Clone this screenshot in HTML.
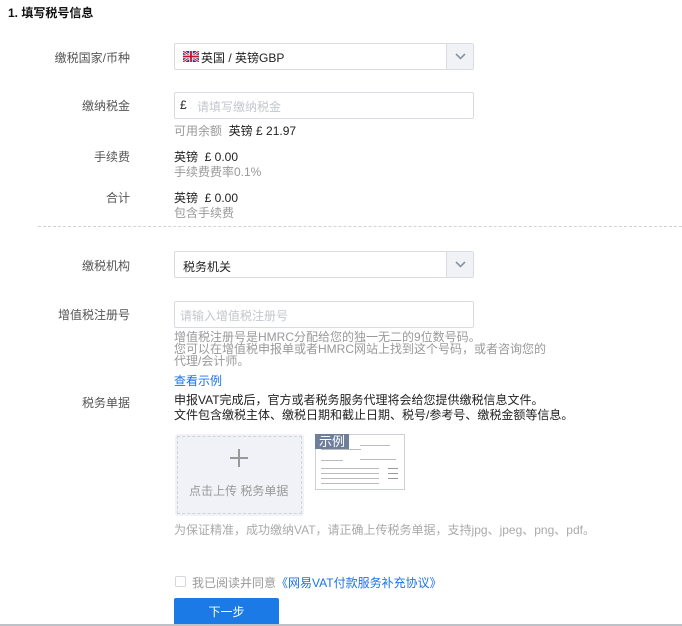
<!DOCTYPE html>
<html><head><meta charset="utf-8"><style>
*{margin:0;padding:0;box-sizing:border-box}
body{width:682px;height:626px;position:relative;background:#fff;font-family:"Liberation Sans","Noto Sans CJK SC",sans-serif;font-size:12px;color:#222;overflow:hidden}
.a{position:absolute;white-space:nowrap}
.lbl{position:absolute;right:552px;color:#555;text-align:right;white-space:nowrap}
.g{color:#999}
.box{position:absolute;left:174px;width:300px;height:27px;border:1px solid #d8dbe2;border-radius:2px;background:#fff}
.sel .arr{position:absolute;right:0;top:0;width:27px;height:25px;background:#f0f2f6;border-left:1px solid #d8dbe2}
.blue{color:#1a73e8}
</style></head><body>
<div class="a" style="left:8px;top:4px;font-weight:bold;font-size:12px;color:#111">1. 填写税号信息</div>

<div class="lbl" style="top:49px">缴税国家/币种</div>
<div class="box sel" style="top:43px">
 <svg class="a" style="left:8px;top:7px" width="16" height="11" viewBox="0 0 16 11"><rect width="16" height="11" fill="#23408f"/><path d="M0 0L16 11M16 0L0 11" stroke="#fff" stroke-width="2.4"/><path d="M0 0L16 11M16 0L0 11" stroke="#c8102e" stroke-width="1"/><path d="M8 0V11M0 5.5H16" stroke="#fff" stroke-width="3.4"/><path d="M8 0V11M0 5.5H16" stroke="#c8102e" stroke-width="1.8"/></svg>
 <span class="a" style="left:26px;top:5px;color:#222">英国 / 英镑GBP</span>
 <div class="arr"><svg class="a" style="left:8px;top:9px" width="11" height="7"><path d="M1 1L5.5 5.5L10 1" fill="none" stroke="#8a94a6" stroke-width="1.6"/></svg></div>
</div>

<div class="lbl" style="top:97px">缴纳税金</div>
<div class="box" style="top:92px"><span class="a" style="left:5px;top:5px">£</span><span class="a" style="left:22px;top:5px;color:#c4c7cc">请填写缴纳税金</span></div>
<div class="a" style="left:174px;top:122px"><span class="g">可用余额</span>&nbsp; 英镑 £ 21.97</div>

<div class="lbl" style="top:148px">手续费</div>
<div class="a" style="left:174px;top:148px">英镑 &nbsp;£ 0.00</div>
<div class="a g" style="left:174px;top:163px">手续费费率0.1%</div>

<div class="lbl" style="top:189px">合计</div>
<div class="a" style="left:174px;top:189px">英镑 &nbsp;£ 0.00</div>
<div class="a g" style="left:174px;top:204px">包含手续费</div>

<div class="a" style="left:38px;top:226px;width:644px;border-top:1px dashed #d0d3da"></div>

<div class="lbl" style="top:257px">缴税机构</div>
<div class="box sel" style="top:251px">
 <span class="a" style="left:8px;top:6px;color:#222">税务机关</span>
 <div class="arr"><svg class="a" style="left:8px;top:9px" width="11" height="7"><path d="M1 1L5.5 5.5L10 1" fill="none" stroke="#8a94a6" stroke-width="1.6"/></svg></div>
</div>

<div class="lbl" style="top:306px">增值税注册号</div>
<div class="box" style="top:301px"><span class="a" style="left:5px;top:5px;color:#c4c7cc">请输入增值税注册号</span></div>
<div class="a g" style="left:174px;top:331px;line-height:12px">增值税注册号是HMRC分配给您的独一无二的9位数号码。<br>您可以在增值税申报单或者HMRC网站上找到这个号码，或者咨询您的<br>代理/会计师。</div>
<div class="a blue" style="left:174px;top:372px">查看示例</div>

<div class="lbl" style="top:394px">税务单据</div>
<div class="a" style="left:174px;top:393px;line-height:15px">申报VAT完成后，官方或者税务服务代理将会给您提供缴税信息文件。<br>文件包含缴税主体、缴税日期和截止日期、税号/参考号、缴税金额等信息。</div>

<div class="a" style="left:175px;top:434px;width:129px;height:82px;background:#f0f2f7;border-radius:3px"><div style="position:absolute;left:2px;top:2px;right:2px;bottom:2px;border:1px dashed #cfd3dc"></div>
 <div class="a" style="left:55px;top:23px;width:18px;height:1.5px;background:#999"></div>
 <div class="a" style="left:63px;top:15px;width:1.5px;height:18px;background:#999"></div>
 <div class="a g" style="left:14px;top:48px;font-size:12px">点击上传 税务单据</div>
</div>

<div class="a" style="left:315px;top:434px;width:90px;height:56px;border:1px solid #ccd0da;background:#fff">
 <div class="a" style="left:5px;top:14px;width:40px;height:1px;background:#bbb"></div>
 <div class="a" style="left:44px;top:10px;width:30px;height:1px;background:#bbb"></div>
 <div class="a" style="left:5px;top:25px;width:22px;height:1px;background:#bbb"></div>
 <div class="a" style="left:44px;top:24px;width:36px;height:1px;background:#bbb"></div>
 <div class="a" style="left:5px;top:33px;width:58px;height:1px;background:#bbb"></div>
 <div class="a" style="left:5px;top:38px;width:58px;height:1px;background:#bbb"></div>
 <div class="a" style="left:5px;top:43px;width:58px;height:1px;background:#bbb"></div>
 <div class="a" style="left:5px;top:48px;width:58px;height:1px;background:#bbb"></div>
 <div class="a" style="left:72px;top:33px;width:10px;height:15px;background:repeating-linear-gradient(#999 0 1px,transparent 1px 5px)"></div>
 <div class="a" style="left:-1px;top:-1px;width:34px;height:15px;background:#6f7f9a;color:#fff;font-size:13px;line-height:15px;text-align:center">示例</div>
</div>

<div class="a g" style="left:174px;top:521px;color:#aaa">为保证精准，成功缴纳VAT，请正确上传税务单据，支持jpg、jpeg、png、pdf。</div>

<div class="a" style="left:175px;top:576px;width:11px;height:11px;border:1px solid #d4d7de;border-radius:2px"></div>
<div class="a" style="left:192px;top:574px"><span style="color:#999">我已阅读并同意</span><span class="blue">《网易VAT付款服务补充协议》</span></div>

<div class="a" style="left:174px;top:598px;width:105px;height:28px;background:#1b7ae6;border-radius:2px 2px 0 0;color:#fff;text-align:center;line-height:28px">下一步</div>
<div class="a" style="left:0;top:624px;width:682px;height:2px;background:#bcc2c8"></div>
</body></html>
